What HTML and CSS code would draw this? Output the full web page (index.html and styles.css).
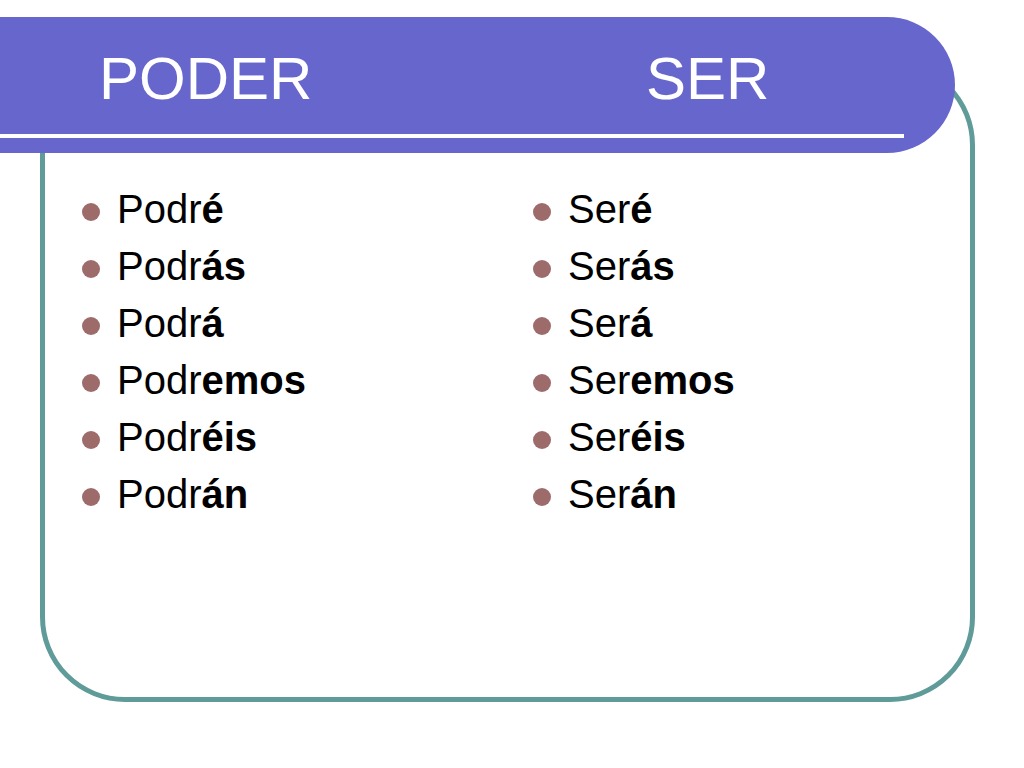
FILE: index.html
```html
<!DOCTYPE html>
<html lang="es">
<head>
<meta charset="utf-8">
<title>PODER / SER</title>
<link rel="stylesheet" href="styles.css">
</head>
<body>
<div class="slide">
  <header class="title-bar">
    <div class="title-row">
      <h1 class="title"><span class="t-left">PODER</span><span class="t-right">SER</span></h1>
    </div>
    <div class="title-rule"></div>
  </header>
  <main class="frame">
    <div class="columns">
      <ul class="list">
        <li><span class="dot"></span><span class="word">Podr<b>é</b></span></li>
        <li><span class="dot"></span><span class="word">Podr<b>ás</b></span></li>
        <li><span class="dot"></span><span class="word">Podr<b>á</b></span></li>
        <li><span class="dot"></span><span class="word">Podr<b>emos</b></span></li>
        <li><span class="dot"></span><span class="word">Podr<b>éis</b></span></li>
        <li><span class="dot"></span><span class="word">Podr<b>án</b></span></li>
      </ul>
      <ul class="list">
        <li><span class="dot"></span><span class="word">Ser<b>é</b></span></li>
        <li><span class="dot"></span><span class="word">Ser<b>ás</b></span></li>
        <li><span class="dot"></span><span class="word">Ser<b>á</b></span></li>
        <li><span class="dot"></span><span class="word">Ser<b>emos</b></span></li>
        <li><span class="dot"></span><span class="word">Ser<b>éis</b></span></li>
        <li><span class="dot"></span><span class="word">Ser<b>án</b></span></li>
      </ul>
    </div>
  </main>
</div>
</body>
</html>
```

FILE: styles.css
```css
* { box-sizing: border-box; }

html, body {
  margin: 0;
  padding: 0;
  background: #ffffff;
  width: 1024px;
  height: 768px;
  overflow: hidden;
  font-family: "Liberation Sans", Arial, sans-serif;
}

.slide {
  width: 1024px;
  height: 768px;
  padding-top: 17px;
}

.title-bar {
  position: relative;
  z-index: 2;
  width: 955px;
  height: 136px;
  background: #6666cc;
  border-radius: 0 68px 68px 0;
  display: flex;
  flex-direction: column;
}

.title-row {
  height: 117px;
  padding-top: 32px;
}

.title {
  margin: 0;
  font-weight: normal;
  font-size: 60px;
  line-height: 60px;
  color: #ffffff;
  display: flex;
}

.t-left {
  width: 646px;
  padding-left: 99px;
}

.title-rule {
  width: 904px;
  height: 4px;
  background: #ffffff;
}

.frame {
  position: relative;
  z-index: 1;
  margin-top: -93px;
  margin-left: 40px;
  width: 935px;
  height: 642px;
  border: 5px solid #5f9b98;
  border-radius: 85px;
  padding-top: 116px;
  padding-left: 37px;
}

.columns {
  display: grid;
  grid-template-columns: 451px 1fr;
}

.list {
  list-style: none;
  margin: 0;
  padding: 0;
}

.list li {
  display: flex;
  align-items: flex-start;
  height: 57px;
  font-size: 40px;
  line-height: 57px;
  color: #000000;
}

.dot {
  flex: none;
  width: 18px;
  height: 18px;
  margin-top: 22px;
  margin-right: 17px;
  border-radius: 50%;
  background: #9e6b6b;
}

.word b {
  font-weight: bold;
}
```
